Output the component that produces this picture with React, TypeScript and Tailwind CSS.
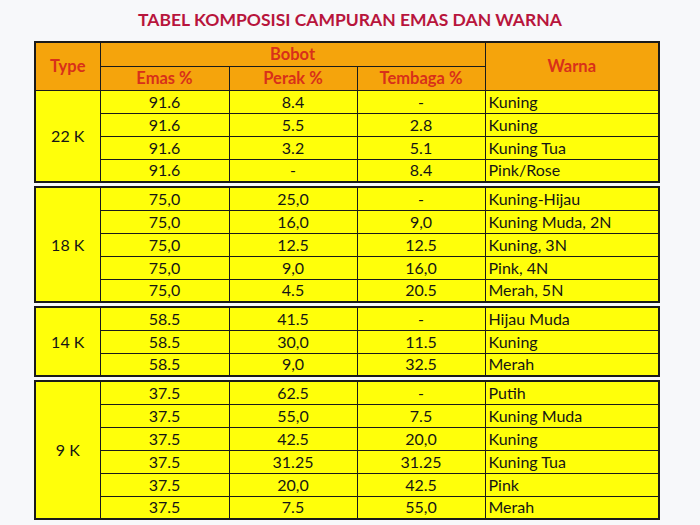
import React from 'react';

interface Row {
  emas: string;
  perak: string;
  tembaga: string;
  warna: string;
}

interface Group {
  type: string;
  rows: Row[];
}

const groups: Group[] = [
  {
    type: '22 K',
    rows: [
      { emas: '91.6', perak: '8.4', tembaga: '-', warna: 'Kuning' },
      { emas: '91.6', perak: '5.5', tembaga: '2.8', warna: 'Kuning' },
      { emas: '91.6', perak: '3.2', tembaga: '5.1', warna: 'Kuning Tua' },
      { emas: '91.6', perak: '-', tembaga: '8.4', warna: 'Pink/Rose' },
    ],
  },
  {
    type: '18 K',
    rows: [
      { emas: '75,0', perak: '25,0', tembaga: '-', warna: 'Kuning-Hijau' },
      { emas: '75,0', perak: '16,0', tembaga: '9,0', warna: 'Kuning Muda, 2N' },
      { emas: '75,0', perak: '12.5', tembaga: '12.5', warna: 'Kuning, 3N' },
      { emas: '75,0', perak: '9,0', tembaga: '16,0', warna: 'Pink, 4N' },
      { emas: '75,0', perak: '4.5', tembaga: '20.5', warna: 'Merah, 5N' },
    ],
  },
  {
    type: '14 K',
    rows: [
      { emas: '58.5', perak: '41.5', tembaga: '-', warna: 'Hijau Muda' },
      { emas: '58.5', perak: '30,0', tembaga: '11.5', warna: 'Kuning' },
      { emas: '58.5', perak: '9,0', tembaga: '32.5', warna: 'Merah' },
    ],
  },
  {
    type: '9 K',
    rows: [
      { emas: '37.5', perak: '62.5', tembaga: '-', warna: 'Putih' },
      { emas: '37.5', perak: '55,0', tembaga: '7.5', warna: 'Kuning Muda' },
      { emas: '37.5', perak: '42.5', tembaga: '20,0', warna: 'Kuning' },
      { emas: '37.5', perak: '31.25', tembaga: '31.25', warna: 'Kuning Tua' },
      { emas: '37.5', perak: '20,0', tembaga: '42.5', warna: 'Pink' },
      { emas: '37.5', perak: '7.5', tembaga: '55,0', warna: 'Merah' },
    ],
  },
];

function Cols() {
  return (
    <colgroup>
      <col className="w-[65px]" />
      <col className="w-[129px]" />
      <col className="w-[128px]" />
      <col className="w-[128px]" />
      <col />
    </colgroup>
  );
}

function GroupRows({ group }: { group: Group }) {
  return (
    <>
      {group.rows.map((r, i) => (
        <tr key={i} className="h-[23px]">
          {i === 0 && (
            <td rowSpan={group.rows.length} className="border-[1.5px] border-[#1a1a1a] text-center align-middle">
              {group.type}
            </td>
          )}
          <td className="border-[1.5px] border-[#1a1a1a] text-center leading-none">{r.emas}</td>
          <td className="border-[1.5px] border-[#1a1a1a] text-center leading-none">{r.perak}</td>
          <td className="border-[1.5px] border-[#1a1a1a] text-center leading-none">{r.tembaga}</td>
          <td className="border-[1.5px] border-[#1a1a1a] pl-[3px] text-left leading-none">{r.warna}</td>
        </tr>
      ))}
    </>
  );
}

export default function App() {
  const [first, ...rest] = groups;
  return (
    <div className="w-[700px] h-[525px] bg-[#f7f8fa] overflow-hidden" style={{ fontFamily: 'Lato, "Open Sans", sans-serif' }}>
      <h1 className="pt-[9px] h-[41px] text-center text-[17.5px] font-bold text-[#b8153c] leading-[22px]">
        TABEL KOMPOSISI CAMPURAN EMAS DAN WARNA
      </h1>

      <div className="ml-[34px] w-[626px] flex flex-col gap-[3px] text-[16px] text-[#151515]">
        <table className="w-full table-fixed border-collapse border-2 border-[#1a1a1a] bg-[#ffff0a]">
          <Cols />
          <thead className="bg-[#f5a40c] text-[#d8301a] font-bold text-[16.5px]">
            <tr className="h-[24px]">
              <th rowSpan={2} className="border-[1.5px] border-[#1a1a1a] text-center">Type</th>
              <th colSpan={3} className="border-[1.5px] border-[#1a1a1a] text-center leading-none">Bobot</th>
              <th rowSpan={2} className="border-[1.5px] border-[#1a1a1a] text-center">Warna</th>
            </tr>
            <tr className="h-[24px]">
              <th className="border-[1.5px] border-[#1a1a1a] text-center leading-none">Emas %</th>
              <th className="border-[1.5px] border-[#1a1a1a] text-center leading-none">Perak %</th>
              <th className="border-[1.5px] border-[#1a1a1a] text-center leading-none">Tembaga %</th>
            </tr>
          </thead>
          <tbody>
            <GroupRows group={first} />
          </tbody>
        </table>

        {rest.map((g) => (
          <table key={g.type} className="w-full table-fixed border-collapse border-2 border-[#1a1a1a] bg-[#ffff0a]">
            <Cols />
            <tbody>
              <GroupRows group={g} />
            </tbody>
          </table>
        ))}
      </div>
    </div>
  );
}
